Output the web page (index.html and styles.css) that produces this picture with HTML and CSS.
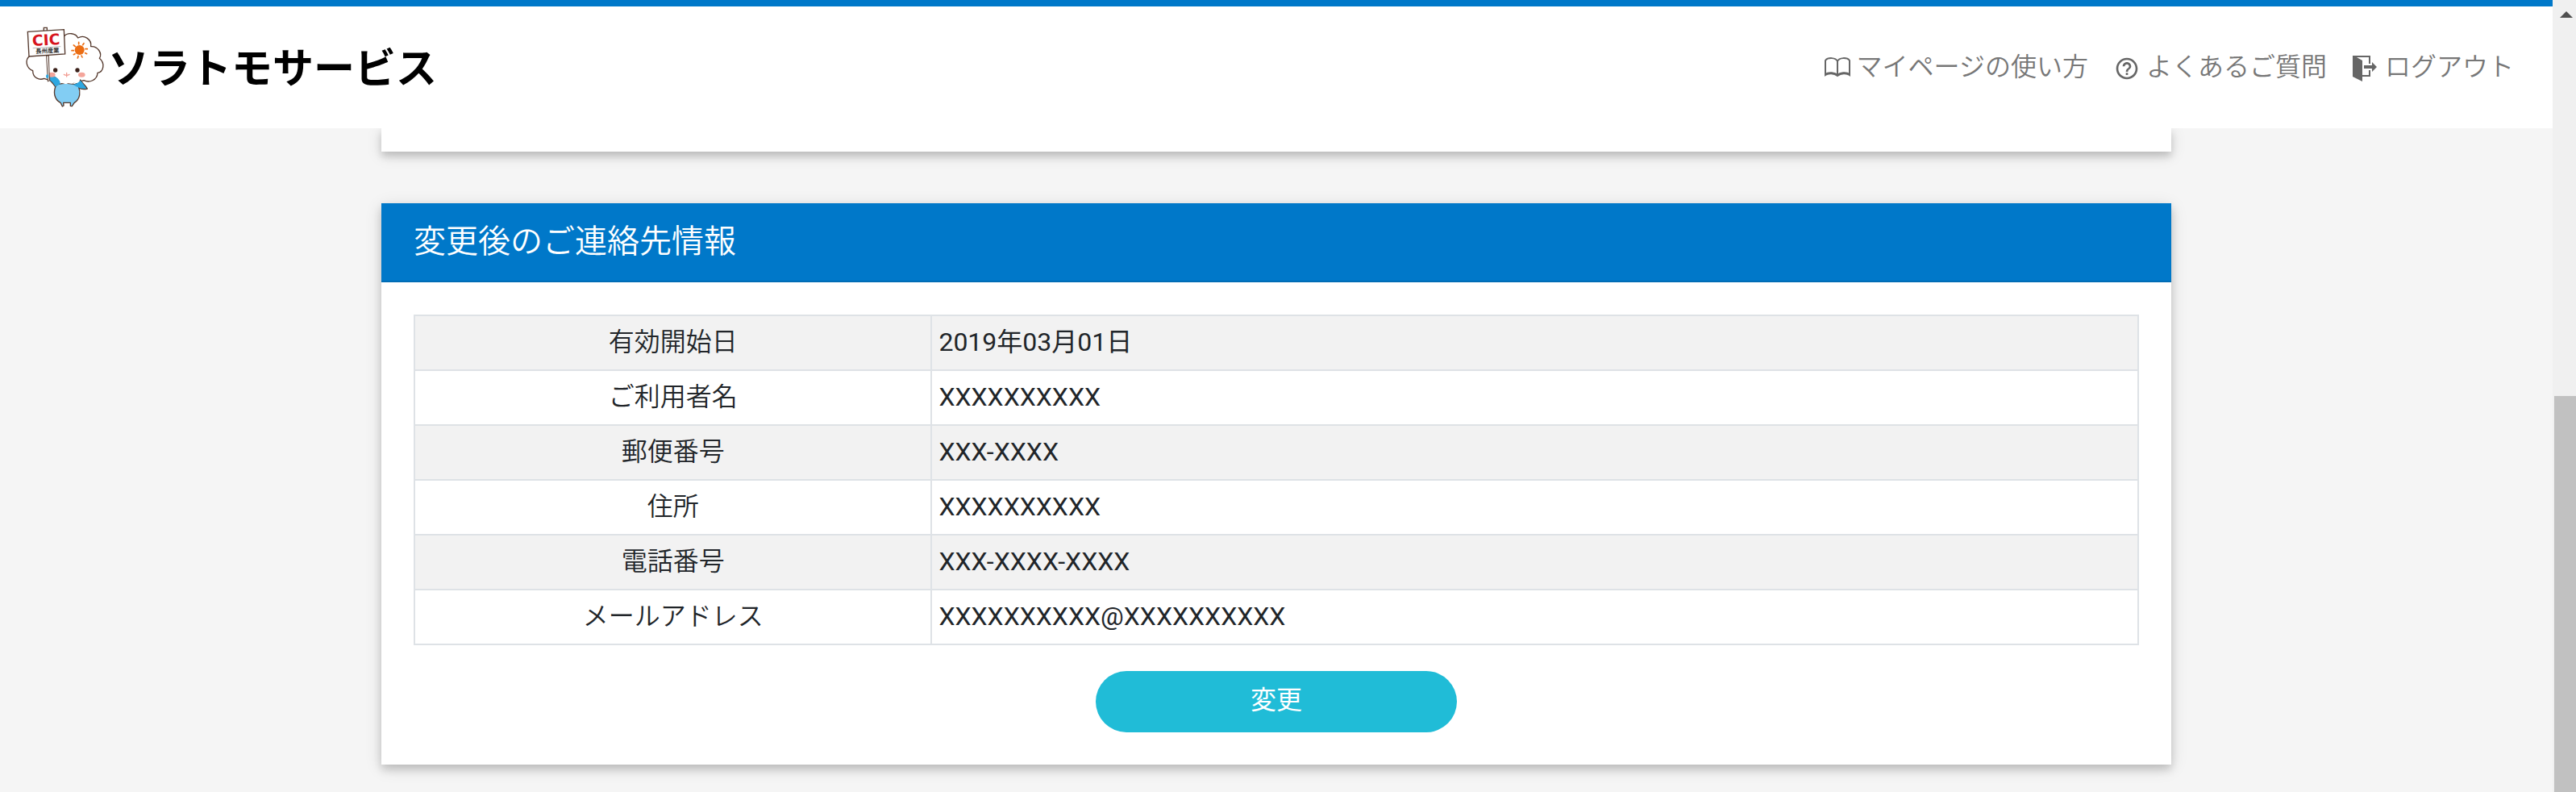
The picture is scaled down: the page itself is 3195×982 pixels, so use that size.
FILE: index.html
```html
<!DOCTYPE html>
<html lang="ja">
<head>
<meta charset="utf-8">
<title>ソラトモサービス</title>
<link rel="stylesheet" href="styles.css">
</head>
<body>
<div class="app">
  <header class="header">
    <a class="brand" href="#">
      <svg class="mascot" viewBox="30 40 300 300" aria-hidden="true">
        <g stroke="#54382c" stroke-width="4" stroke-linejoin="round" stroke-linecap="round">
          <path fill="#fff" d="M104 233 C88 240 62 232 62 204 C38 194 30 164 52 148 L178 76 C192 60 222 64 230 82 C254 68 282 88 278 114 C304 112 322 140 310 158 C332 176 326 208 303 212 C302 240 272 250 252 240 C220 252 150 252 126 240 Z"/>
          <path fill="#2ea7e0" d="M125 222 C145 222 162 240 163 258 C156 268 148 266 146 264 C138 250 126 240 125 240 Z"/>
          <path fill="#2ea7e0" d="M214 258 C226 252 236 246 239 238 C246 252 258 258 265 271 C252 274 240 272 232 268 Z"/>
          <path fill="#82cdf3" d="M148 260 C138 282 140 310 166 324 L172 337 L177 334 L176 323 L202 323 L202 335 L208 336 L216 324 C240 308 240 282 232 262 C222 250 160 246 148 260 Z"/>
        </g>
        <path fill="#fff" d="M150 236 H236 V244 C230 256 218 246 212 250 C206 256 196 248 190 252 C182 256 174 248 168 250 C160 254 152 246 150 236 Z"/>
        <path fill="#2ea7e0" d="M212 256 C226 252 236 244 240 240 L262 270 C246 272 232 268 212 256 Z"/>
        <path fill="#2ea7e0" d="M127 224 C146 222 166 238 164 252 C158 258 152 258 146 263 C140 250 134 244 127 240 Z"/>
        <ellipse cx="132" cy="219" rx="14" ry="9" fill="#f4a59b"/>
        <ellipse cx="244" cy="219" rx="13" ry="9" fill="#f4a59b"/>
        <circle cx="146" cy="202" r="8" fill="#3b211a"/>
        <circle cx="228" cy="202" r="8" fill="#3b211a"/>
        <path d="M188 212 V226 M178 218 Q188 224 198 218" fill="none" stroke="#f29c92" stroke-width="4" stroke-linecap="round"/>
        <circle cx="236" cy="127" r="18" fill="#eb6d13"/>
        <path d="M233 98 V105 M252 102 L248 108 M265 123 H258 M263 141 L257 138 M246 154 L243 148 M229 157 L231 150 M214 144 L219 141 M207 129 H214 M214 109 L220 114" stroke="#eb6d13" stroke-width="5" stroke-linecap="round"/>
        <path fill="#fff" stroke="#54382c" stroke-width="3" d="M113 148 L118 244 L124 240 L121 148 Z"/>
        <ellipse cx="116" cy="225" rx="5" ry="7" fill="#2ea7e0"/>
        <path fill="#fff" stroke="#54382c" stroke-width="4" d="M103 56 V44 H115 V56"/>
        <path fill="#fff" stroke="#54382c" stroke-width="4" d="M43 59 L178 51 L182 142 L48 151 Z"/>
        <path d="M62 120 L166 114" stroke="#999" stroke-width="2"/>
        <g transform="rotate(-3 112 100)" text-anchor="middle">
          <text class="sign-mark" x="112" y="109">CIC</text>
          <text class="sign-name" x="115" y="138">長州産業</text>
        </g>
      </svg>
      <span class="brand-name">ソラトモサービス</span>
    </a>
    <nav class="nav">
      <a class="nav-link" href="#">
        <svg class="icon" viewBox="0 0 32 32" aria-hidden="true"><path fill="none" stroke="#666" stroke-width="2" d="M16 9 C14 4 4 4 1 8 V26 C5 23 12 24 16 27 C20 24 27 23 31 26 V8 C28 4 18 4 16 9 V26 M1 25 C5 22 13 23 16 26 C19 23 27 22 31 25"/></svg>
        <span>マイページの使い方</span>
      </a>
      <a class="nav-link" href="#">
        <svg class="icon icon-help" viewBox="0 0 24 24" aria-hidden="true"><path fill="#666" d="M11 18h2v-2h-2v2zm1-16C6.480 2 2 6.480 2 12s4.480 10 10 10 10-4.480 10-10S17.520 2 12 2zm0 18c-4.410 0-8-3.590-8-8s3.590-8 8-8 8 3.590 8 8-3.590 8-8 8zm0-14c-2.210 0-4 1.790-4 4h2c0-1.100.9-2 2-2s2 .9 2 2c0 2-3 1.750-3 5h2c0-2.250 3-2.500 3-5 0-2.210-1.790-4-4-4z"/></svg>
        <span>よくあるご質問</span>
      </a>
      <a class="nav-link" href="#">
        <svg class="icon icon-logout" viewBox="0 0 32 32" aria-hidden="true"><path fill="#666" d="M0 0 H22 V10 H20 V2 H5 L12 6 V24 H20 V18 H22 V26 H12 V32 L0 26 Z M14 12 H24 V8 L30 14 L24 20 V16 H14 Z"/></svg>
        <span>ログアウト</span>
      </a>
    </nav>
  </header>
  <main class="content">
    <section class="card card-previous"></section>
    <section class="card">
      <h2 class="card-title">変更後のご連絡先情報</h2>
      <div class="card-body">
        <table class="info">
          <tbody>
            <tr><th scope="row">有効開始日</th><td>2019年03月01日</td></tr>
            <tr><th scope="row">ご利用者名</th><td>XXXXXXXXXX</td></tr>
            <tr><th scope="row">郵便番号</th><td>XXX-XXXX</td></tr>
            <tr><th scope="row">住所</th><td>XXXXXXXXXX</td></tr>
            <tr><th scope="row">電話番号</th><td>XXX-XXXX-XXXX</td></tr>
            <tr><th scope="row">メールアドレス</th><td>XXXXXXXXXX@XXXXXXXXXX</td></tr>
          </tbody>
        </table>
        <button class="submit" type="button">変更</button>
      </div>
    </section>
  </main>
</div>
<div class="scrollbar" aria-hidden="true">
  <svg class="scroll-up" viewBox="0 0 16 8"><path fill="#505050" d="M8 0 L16 8 H0 Z"/></svg>
  <div class="scroll-thumb"></div>
</div>
</body>
</html>
```
FILE: styles.css
```css
* {
  box-sizing: border-box;
}

body {
  display: flex;
  height: 100vh;
  margin: 0;
  overflow: hidden;
  background: #f5f5f5;
  color: #212529;
  font-family: Roboto, "Noto Sans CJK JP", sans-serif;
  font-size: 32px;
  font-weight: 350;
  line-height: 48px;
}

.app {
  flex: 1;
  min-width: 0;
  overflow: hidden;
}

.header {
  position: relative;
  z-index: 1;
  display: flex;
  align-items: center;
  justify-content: space-between;
  padding: 25px 48px 26px 30px;
  border-top: 8px solid #0078c9;
  background: #fff;
}

.brand {
  display: flex;
  align-items: center;
  gap: 4px;
  color: #000;
  text-decoration: none;
}

.mascot {
  width: 100px;
  height: 100px;
}

.sign-mark {
  fill: #d7141e;
  font-family: "DejaVu Sans", sans-serif;
  font-size: 56px;
  font-weight: 700;
}

.sign-name {
  fill: #333;
  font-family: "Noto Sans CJK JP", sans-serif;
  font-size: 22px;
  font-weight: 700;
}

.brand-name {
  padding-top: 6px;
  font-size: 51px;
  font-weight: 700;
}

.nav {
  display: flex;
  gap: 32px;
}

.nav-link {
  display: flex;
  align-items: center;
  gap: 8px;
  color: #777;
  text-decoration: none;
}

.icon {
  width: 32px;
  height: 32px;
}

.icon-help,
.icon-logout {
  margin-top: 4px;
}

.content {
  width: 90%;
  max-width: 2220px;
  margin: 0 auto;
}

.card {
  margin-bottom: 64px;
  background: #fff;
  box-shadow: 0 6px 10px rgba(0, 0, 0, 0.16), 0 4px 20px rgba(0, 0, 0, 0.12);
}

.card-previous {
  height: 29px;
}

.card-title {
  margin: 0;
  padding: 24px 40px;
  border-bottom: 2px solid #006cb5;
  background: #0078c9;
  color: #fff;
  font-size: 40px;
  font-weight: 350;
  line-height: 48px;
}

.card-body {
  padding: 40px;
}

.info {
  width: 100%;
  border-collapse: collapse;
  table-layout: fixed;
}

.info th,
.info td {
  padding: 8px 8px 10px;
  border: 2px solid #dee2e6;
  text-align: left;
  font-weight: 400;
}

.info th {
  width: 30%;
  text-align: center;
  font-weight: 350;
}

.info tr:nth-child(odd) {
  background: #f2f2f2;
}

.submit {
  display: block;
  width: 448px;
  margin: 32px auto 0;
  padding: 12px 24px 16px;
  border: 0;
  border-radius: 38px;
  background: #20bcd7;
  color: #fff;
  font: inherit;
  font-weight: 400;
}

.scrollbar {
  display: flex;
  flex: none;
  flex-direction: column;
  justify-content: space-between;
  width: 29px;
  background: #f0f0f0;
}

.scroll-up {
  width: 16px;
  height: 8px;
  margin: 14px 0 0 9px;
}

.scroll-thumb {
  height: 50%;
  margin-left: 2px;
  background: #c1c1c1;
}
```
